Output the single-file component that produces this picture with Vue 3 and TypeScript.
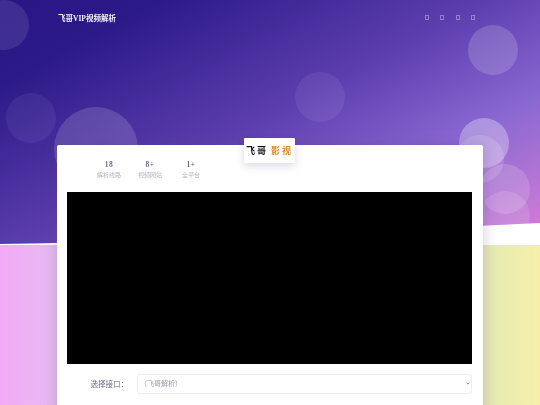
<script setup lang="ts">
interface Bubble { x: number; y: number; r: number; a: number }
const bubbles: Bubble[] = [
  { x: 4, y: 25, r: 25, a: 0.1 },
  { x: 31, y: 118, r: 25, a: 0.06 },
  { x: 96, y: 149, r: 42, a: 0.15 },
  { x: 493, y: 50, r: 25, a: 0.16 },
  { x: 320, y: 97, r: 25, a: 0.07 },
  { x: 484, y: 143, r: 25, a: 0.3 },
  { x: 480, y: 159, r: 24, a: 0.15 },
  { x: 505, y: 189, r: 25, a: 0.15 },
  { x: 505, y: 216, r: 25, a: 0.12 },
]
const bubbleStyle = (b: Bubble) => ({
  left: `${b.x - b.r}px`,
  top: `${b.y - b.r}px`,
  width: `${b.r * 2}px`,
  height: `${b.r * 2}px`,
  background: `rgba(255,255,255,${b.a})`,
})
const stats = [
  { value: '18', label: '解析线路' },
  { value: '8+', label: '视频网站' },
  { value: '1+', label: '全平台' },
]
</script>

<template>
  <div class="page">
    <div class="backdrop" aria-hidden="true">
      <div class="hero">
        <span v-for="(b, i) in bubbles" :key="i" class="bubble" :style="bubbleStyle(b)"></span>
        <svg class="wave" viewBox="0 0 540 24" preserveAspectRatio="none">
          <path d="M0 23 C150 21 300 13 540 2 L540 24 L0 24 Z" fill="#fff" />
        </svg>
      </div>
      <div class="lower"></div>
    </div>

    <header class="nav">
      <span class="brand">飞哥VIP视频解析</span>
      <nav class="nav-icons">
        <i v-for="n in 4" :key="n" class="tofu"></i>
      </nav>
    </header>

    <main class="card">
      <div class="logo"><span class="ink">飞哥</span><span class="amber">影视</span></div>
      <ul class="stats">
        <li v-for="s in stats" :key="s.label" class="stat">
          <strong>{{ s.value }}</strong>
          <span>{{ s.label }}</span>
        </li>
      </ul>
      <div class="video"></div>
      <div class="field">
        <label class="field-label" for="api">选择接口：</label>
        <div class="select-wrap">
          <select id="api" class="select">
            <option>（飞哥解析）</option>
          </select>
          <svg class="chevron" viewBox="0 0 6 4" aria-hidden="true">
            <path d="M1 1 L3 3 L5 1" fill="none" stroke="#5f6172" stroke-width="1.2" />
          </svg>
        </div>
      </div>
    </main>
  </div>
</template>

<style>
html, body { margin: 0; overflow: hidden; }
</style>

<style scoped>
.page {
  position: relative;
  width: 540px;
  height: 405px;
  overflow: hidden;
  font-family: "Liberation Serif", "Noto Sans CJK SC", serif;
}
.backdrop {
  position: absolute;
  inset: 0;
  display: flex;
  flex-direction: column;
}
.hero {
  position: relative;
  height: 245px;
  overflow: hidden;
  background: linear-gradient(152deg, #2a1585 0%, #2c1a88 16%, #5c3dae 48%, #8a68d2 72%, #d77fd6 100%);
}
.bubble {
  position: absolute;
  border-radius: 50%;
}
.wave {
  position: absolute;
  left: 0;
  right: 0;
  bottom: 0;
  width: 540px;
  height: 24px;
  display: block;
}
.lower {
  flex: 1;
  background: linear-gradient(90deg, #f3a9f6 0%, #e6bcf2 10.5%, #e4ebb4 89.5%, #f5efa8 100%);
}
.nav {
  position: relative;
  display: flex;
  justify-content: space-between;
  align-items: center;
  height: 35px;
  padding: 0 65px 0 58px;
  filter: blur(0.25px);
}
.brand {
  font-size: 7.5px;
  font-weight: 700;
  color: #f4f0fb;
}
.nav-icons {
  display: flex;
  gap: 11.5px;
}
.tofu {
  width: 4px;
  height: 5px;
  box-sizing: border-box;
  border: 0.7px solid rgba(255, 255, 255, 0.35);
}
.card {
  position: relative;
  box-sizing: border-box;
  width: 426px;
  height: 300px;
  margin: 110px 0 0 57px;
  padding: 0 10.6px 0 10.4px;
  background: #fff;
  border-radius: 2px 2px 0 0;
  box-shadow: 0 0 16px rgba(90, 60, 130, 0.28);
  filter: blur(0.25px);
}
.logo {
  position: absolute;
  left: 187px;
  top: -7px;
  width: 51px;
  height: 25px;
  display: flex;
  align-items: center;
  justify-content: center;
  gap: 3px;
  background: #fff;
  border-radius: 1px;
  box-shadow: 0 3px 8px rgba(60, 40, 100, 0.18);
  font-size: 9px;
  font-weight: 700;
  letter-spacing: 2px;
  white-space: nowrap;
}
.ink { color: #111; }
.amber { color: #e58a2a; }
.stats {
  display: flex;
  margin: 0;
  padding: 16px 0 0 21px;
  height: 47px;
  box-sizing: border-box;
  list-style: none;
}
.stat {
  width: 41px;
  display: flex;
  flex-direction: column;
  align-items: center;
  gap: 2px;
  line-height: 8px;
}
.stat strong {
  font-size: 7.5px;
  font-weight: 700;
  color: #6a6f8a;
  letter-spacing: 0.3px;
}
.stat span {
  font-size: 6px;
  color: #b4b5be;
  white-space: nowrap;
}
.video {
  height: 171.5px;
  background: #000;
}
.field {
  display: flex;
  align-items: center;
  margin-top: 10.5px;
}
.field-label {
  width: 69.6px;
  padding-left: 23px;
  box-sizing: border-box;
  font-size: 7.5px;
  color: #666a85;
  white-space: nowrap;
}
.select-wrap {
  position: relative;
  flex: 1;
  display: flex;
}
.select {
  flex: 1;
  height: 19.5px;
  padding: 0 3px 0 2px;
  appearance: none;
  background: #fff;
  border: 1px solid #efeff2;
  border-radius: 2px;
  font-family: inherit;
  font-size: 7px;
  color: #9a9cb0;
  outline: none;
}
.chevron {
  position: absolute;
  right: 2px;
  top: 8px;
  width: 4px;
  height: 3px;
}
</style>
